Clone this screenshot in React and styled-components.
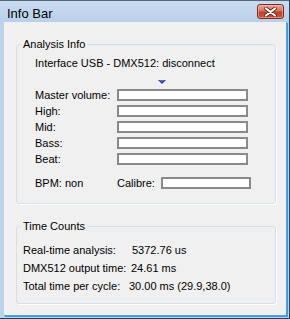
import React from 'react'
import styled, { createGlobalStyle } from 'styled-components'

const Global = createGlobalStyle`
  html, body {
    margin: 0;
    padding: 0;
    overflow: hidden;
    background: #ffffff;
  }
  * { box-sizing: border-box; }
`

const Window = styled.div`
  width: 290px;
  height: 319px;
  display: flex;
  flex-direction: column;
  background: #bcd3ec;
  border-top: 1px solid #56677a;
  border-right: 1px solid #23415f;
  border-bottom: 1px solid #23415f;
  font-family: "Liberation Sans", Arial, sans-serif;
  font-size: 11px;
  color: #000;
`

const TitleBar = styled.div`
  height: 21px;
  flex: none;
  display: flex;
  align-items: flex-start;
  justify-content: space-between;
  padding-left: 7px;
  background: linear-gradient(#c9dcf1, #b9d0ea);
`

const Title = styled.span`
  font-size: 13px;
  line-height: 13px;
  margin-top: 6px;
  color: #000;
`

const CloseButton = styled.div`
  width: 27px;
  height: 15px;
  margin-top: 3px;
  margin-right: 5px;
  border: 1px solid #7a2e24;
  border-radius: 3px;
  display: flex;
  align-items: center;
  justify-content: center;
  background: linear-gradient(#e9a797 0%, #d7725d 45%, #c23f28 55%, #d0553c 100%);
  box-shadow: inset 0 0 0 1px rgba(255, 200, 190, 0.5);
`

const Client = styled.div`
  flex: 1;
  margin: 0 2px 2px 4px;
  background: #f0f0f0;
  border-right: 1px solid #48a6e4;
  border-bottom: 1px solid #48a6e4;
  box-shadow: 1px 1px 0 #3b9be0;
  padding: 16px 10px 0 12px;
  display: flex;
  flex-direction: column;
`

const Group = styled.fieldset`
  margin: ${p => p.$top || 0}px 0 0 0;
  padding: 0;
  min-width: 0;
  border: 1px solid #d5dfe5;
  border-radius: 3px;
  box-shadow: 1px 1px 0 #ffffff;
`

const Legend = styled.legend`
  margin-left: 4px;
  padding: 0 2px;
  line-height: 13px;
  font-size: 11px;
`

const Body = styled.div`
  padding: ${p => p.$pad};
`

const Status = styled.div`
  line-height: 13px;
`

const Marker = styled.div`
  height: 4px;
  margin: 10px 0 5px 123px;
  display: flex;
`

const Levels = styled.div`
  display: grid;
  grid-template-columns: 82px 131px;
  row-gap: 4px;
  align-items: center;
`

const Label = styled.span`
  line-height: 12px;
  white-space: nowrap;
`

const Meter = styled.div`
  width: ${p => p.$w || 131}px;
  height: 12px;
  border: 2px solid #8a8a8a;
  background: #ffffff;
`

const BpmRow = styled.div`
  display: grid;
  grid-template-columns: 82px 44px auto;
  align-items: center;
  margin-top: 12px;
`

const Times = styled.div`
  display: grid;
  grid-template-columns: 109px auto;
  grid-auto-rows: 18px;
  align-items: center;
`

const TimeLabel = styled.span`
  white-space: nowrap;
`

const TimeValue = styled.span`
  white-space: nowrap;
  margin-left: ${p => p.$shift || 0}px;
`

const levels = ['Master volume:', 'High:', 'Mid:', 'Bass:', 'Beat:']

const times = [
  ['Real-time analysis:', '5372.76 us', 0],
  ['DMX512 output time:', '24.61 ms', -1],
  ['Total time per cycle:', '30.00 ms (29.9,38.0)', -3],
]

function InfoBar() {
  return (
    <Window>
      <TitleBar>
        <Title>Info Bar</Title>
        <CloseButton>
          <svg width="13" height="10" viewBox="0 0 13 10">
            <path d="M2 1.5 L11 8.5 M11 1.5 L2 8.5" stroke="#5a1f18" strokeWidth="3.6" strokeLinecap="round" />
            <path d="M2 1.5 L11 8.5 M11 1.5 L2 8.5" stroke="#ffffff" strokeWidth="2.2" strokeLinecap="round" />
          </svg>
        </CloseButton>
      </TitleBar>
      <Client>
        <Group>
          <Legend>Analysis Info</Legend>
          <Body $pad="6px 0 14px 18px">
            <Status>Interface USB - DMX512: disconnect</Status>
            <Marker>
              <svg width="8" height="4" viewBox="0 0 8 4">
                <polygon points="0,0 8,0 4,4" fill="#2b3f8c" />
                <polygon points="1,0 7,0 4,2" fill="#5a72c0" />
              </svg>
            </Marker>
            <Levels>
              {levels.map(l => (
                <React.Fragment key={l}>
                  <Label>{l}</Label>
                  <Meter />
                </React.Fragment>
              ))}
            </Levels>
            <BpmRow>
              <Label>BPM: non</Label>
              <Label>Calibre:</Label>
              <Meter $w={90} />
            </BpmRow>
          </Body>
        </Group>
        <Group $top={16}>
          <Legend>Time Counts</Legend>
          <Body $pad="8px 0 8px 6px">
            <Times>
              {times.map(([l, v, s]) => (
                <React.Fragment key={l}>
                  <TimeLabel>{l}</TimeLabel>
                  <TimeValue $shift={s}>{v}</TimeValue>
                </React.Fragment>
              ))}
            </Times>
          </Body>
        </Group>
      </Client>
    </Window>
  )
}

export default function App() {
  return (
    <>
      <Global />
      <InfoBar />
    </>
  )
}
